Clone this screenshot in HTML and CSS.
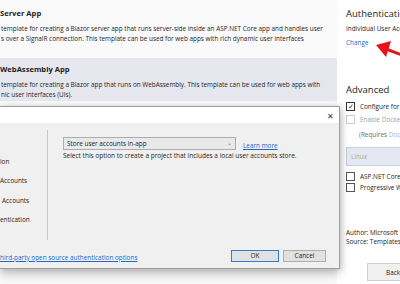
FILE: index.html
```html
<!DOCTYPE html>
<html>
<head>
  <meta charset="utf-8">
  <title>Create a new Blazor app</title>
  <link rel="stylesheet" href="styles.css">
</head>
<body>
  <div class="screen">
    <div class="templates">
      <div class="tpl">
        <div class="tpl-title">Server App</div>
        <div class="tpl-desc">template for creating a Blazor server app that runs server-side inside an ASP.NET Core app and handles user<br>s over a SignalR connection. This template can be used for web apps with rich dynamic user interfaces</div>
      </div>
      <div class="tpl selected">
        <div class="tpl-title">WebAssembly App</div>
        <div class="tpl-desc">template for creating a Blazor app that runs on WebAssembly. This template can be used for web apps with<br>nic user interfaces (UIs).</div>
      </div>
    </div>

    <div class="options">
      <h2>Authentication</h2>
      <div class="auth-type">Individual User Accounts</div>
      <a class="link change">Change</a>
      <h2 class="advanced">Advanced</h2>
      <div class="check"><span class="box checked">&#10003;</span>Configure for HTTPS</div>
      <div class="check disabled"><span class="box"></span>Enable Docker Support</div>
      <div class="requires">(Requires <span class="docker">Docker Desktop</span>)</div>
      <div class="os-select">Linux</div>
      <div class="check first-plain"><span class="box"></span>ASP.NET Core hosted</div>
      <div class="check tight"><span class="box"></span>Progressive Web Application</div>
      <div class="meta">Author: Microsoft<br>Source: Templates 3.1.0</div>
      <button class="back">Back</button>
    </div>
  </div>

  <svg class="arrow" width="30" height="24" viewBox="0 0 30 24">
    <line x1="10" y1="9" x2="26" y2="15" stroke="#e8121b" stroke-width="3"/>
    <polygon points="0,5 15,1 10,17" fill="#e8121b"/>
  </svg>

  <div class="dialog">
    <div class="dlg-head">
      <span class="close">&#10005;</span>
    </div>
    <div class="dlg-body">
      <div class="auth-list">
        <div>ion</div>
        <div>Accounts</div>
        <div class="indent">Accounts</div>
        <div>entication</div>
      </div>
      <div class="auth-detail">
        <div class="store-row">
          <div class="store-select">Store user accounts in-app<span class="caret">&#8964;</span></div>
          <a class="link">Learn more</a>
        </div>
        <div class="store-desc">Select this option to create a project that includes a local user accounts store.</div>
      </div>
    </div>
    <div class="dlg-foot">
      <a class="link">hird-party open source authentication options</a>
      <div class="buttons">
        <button class="btn ok">OK</button>
        <button class="btn">Cancel</button>
      </div>
    </div>
  </div>
</body>
</html>
```

FILE: styles.css
```css
* { margin: 0; padding: 0; box-sizing: border-box; }
body {
  font-family: "Open Sans", sans-serif;
  font-size: 6.4px;
  color: #1e1e1e;
  background: #fff;
  width: 400px;
  height: 284px;
  overflow: hidden;
  position: relative;
}

.screen {
  display: flex;
  height: 284px;
}

.templates {
  width: 337px;
  flex: none;
  background: #f9f9f9;
  overflow: hidden;
}
.tpl {
  height: 58px;
  padding-top: 7px;
  white-space: nowrap;
}
.tpl.selected {
  height: 43px;
  padding-top: 5px;
  background: #e6e7ee;
}
.tpl-title {
  font-weight: 700;
  font-size: 7.6px;
  line-height: 12px;
}
.tpl-desc {
  margin-top: 5px;
  padding-left: 1px;
  line-height: 9.5px;
}

.options {
  flex: 1;
  padding: 6px 0 0 9px;
  white-space: nowrap;
  overflow: hidden;
}
.options h2 {
  font-weight: 400;
  font-size: 9.5px;
  line-height: 16px;
}
.auth-type {
  margin-top: 2px;
  line-height: 10px;
}
.link {
  color: #1b6ac9;
  text-decoration: underline;
}
.change {
  display: block;
  margin-top: 4px;
  line-height: 10px;
  text-decoration: none;
}
.options h2.advanced {
  margin-top: 34px;
}
.check {
  display: flex;
  align-items: center;
  gap: 5px;
  height: 10px;
  margin-top: 3px;
}
.box {
  width: 9px;
  height: 9px;
  border: 1px solid #333;
  background: #fff;
  flex: none;
  font-size: 7px;
  line-height: 7px;
  text-align: center;
}
.check.disabled { color: #a2a2a2; }
.check.disabled .box { border-color: #cfcfcf; }
.requires {
  margin-top: 6px;
  padding-left: 13px;
  line-height: 10px;
  color: #6d6d6d;
}
.docker { color: #9cb8dc; }
.os-select {
  margin-top: 7px;
  height: 19px;
  padding-left: 4px;
  line-height: 17px;
  background: #e4e8f3;
  border: 1px solid #c9cfde;
  border-right: none;
  color: #a9a9a9;
}
.check.first-plain { margin-top: 5px; }
.check.first-plain .box, .check.tight .box { border-color: #555; }
.check.tight { margin-top: 1px; }
.meta {
  margin-top: 36px;
  line-height: 9px;
}
.back {
  display: block;
  margin: 17px 0 0 21px;
  width: 50px;
  height: 18px;
  font: inherit;
  text-align: left;
  padding-left: 18px;
  background: #f0f0f0;
  border: 1px solid #cfcfcf;
  color: #1e1e1e;
}

.arrow {
  position: absolute;
  left: 376px;
  top: 40px;
}

.dialog {
  position: absolute;
  left: 0;
  top: 106px;
  width: 340px;
  height: 163px;
  background: #f0f0f0;
  border: 1px solid #9d9d9d;
  border-left: none;
  box-shadow: 0 5px 9px rgba(0, 0, 0, 0.22), 2px 0 6px rgba(0, 0, 0, 0.12);
  display: flex;
  flex-direction: column;
}
.dlg-head {
  height: 16px;
  background: #fff;
  display: flex;
  justify-content: flex-end;
  align-items: center;
  padding-right: 5px;
}
.close {
  font-size: 8px;
  color: #333;
}
.dlg-body {
  display: flex;
  padding-top: 7px;
}
.auth-list {
  width: 48px;
  height: 110px;
  border-right: 1px solid #c9c9c9;
  padding-top: 22px;
  white-space: nowrap;
}
.auth-list div { line-height: 19.3px; }
.auth-list .indent { padding-left: 2px; }
.auth-detail {
  padding: 7px 0 0 15px;
}
.store-row {
  display: flex;
  align-items: flex-end;
  gap: 7px;
}
.store-select {
  width: 173px;
  height: 13px;
  border: 1px solid #adadad;
  background: #e9e9e9;
  padding-left: 3px;
  line-height: 11px;
  display: flex;
  justify-content: space-between;
}
.caret {
  padding-right: 3px;
  color: #777;
  font-size: 6px;
}
.store-row .link { line-height: 9px; }
.store-desc {
  margin-top: 1px;
  line-height: 10px;
  font-size: 6.5px;
}
.dlg-foot {
  display: flex;
  justify-content: space-between;
  align-items: center;
  margin-top: 10px;
  padding-right: 13px;
}
.dlg-foot > .link { margin-top: 2px; }
.buttons {
  display: flex;
  gap: 4px;
}
.btn {
  font: inherit;
  width: 43px;
  height: 12px;
  line-height: 10px;
  background: #e1e1e1;
  border: 1px solid #adadad;
  color: #1e1e1e;
}
.btn.ok {
  width: 48px;
  border-color: #2a7fd4;
}
```
